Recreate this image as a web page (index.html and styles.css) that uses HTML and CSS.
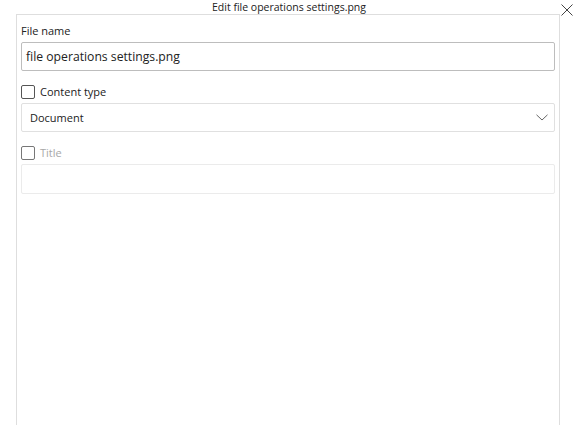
FILE: index.html
```html
<!DOCTYPE html>
<html lang="en">
<head>
<meta charset="utf-8">
<title>Edit file operations settings.png</title>
<link rel="stylesheet" href="styles.css">
</head>
<body>
<div class="dialog">
  <div class="header">
    <span class="title">Edit file operations settings.png</span>
    <button class="close" aria-label="Close">
      <svg width="12" height="12" viewBox="0 0 12 12"><path d="M0.5 0.5 L11.5 11.5 M11.5 0.5 L0.5 11.5" stroke="#444" stroke-width="1" fill="none"/></svg>
    </button>
  </div>
  <div class="panel">
    <div class="field">
      <label class="label">File name</label>
      <div class="input input-dark">file operations settings.png</div>
    </div>
    <div class="field">
      <div class="check-row"><span class="checkbox"></span><span class="label">Content type</span></div>
      <div class="input select">
        <span class="select-text">Document</span>
        <svg class="chevron" width="12" height="7" viewBox="0 0 12 7"><path d="M0.5 0.8 L6 6 L11.5 0.8" stroke="#666" stroke-width="1" fill="none"/></svg>
      </div>
    </div>
    <div class="field">
      <div class="check-row"><span class="checkbox"></span><span class="label muted">Title</span></div>
      <div class="input input-light"></div>
    </div>
  </div>
</div>
</body>
</html>
```
FILE: styles.css
```css
* { box-sizing: border-box; }
html, body { margin: 0; padding: 0; background: #fff; }
body {
  font-family: "Open Sans", "Noto Sans", sans-serif;
  color: #222;
  width: 578px;
  height: 425px;
  overflow: hidden;
}
.dialog { display: flex; flex-direction: column; }
.header {
  position: relative;
  height: 14px;
  display: flex;
  justify-content: center;
}
.title {
  font-size: 10.5px;
  line-height: 14px;
  color: #222;
  margin-top: 0;
}
.close {
  position: absolute;
  right: 5px;
  top: 4px;
  width: 12px;
  height: 12px;
  padding: 0;
  border: 0;
  background: transparent;
  display: block;
}
.close svg { display: block; }
.panel {
  margin-left: 16px;
  width: 544px;
  height: 420px;
  border: 1px solid #dedede;
  border-bottom: 0;
  padding: 8px 4px 0 4px;
  display: flex;
  flex-direction: column;
}
.field { display: flex; flex-direction: column; }
.label {
  font-size: 11px;
  line-height: 16px;
  color: #222;
}
.field > .label { margin-bottom: 3px; }
.input {
  height: 29px;
  border: 1px solid #c6c6c6;
  border-radius: 2px;
  font-size: 12.2px;
  padding: 0 4px;
  display: flex;
  align-items: center;
  color: #222;
}
.input-dark { border-color: #bdbdbd; }
.check-row {
  display: flex;
  align-items: center;
  margin-top: 13px;
  margin-bottom: 3px;
  height: 16px;
}
.checkbox {
  width: 14px;
  height: 14px;
  border: 1px solid #555;
  border-radius: 2px;
  margin-right: 5px;
}
.select {
  border-color: #e0e0e0;
  padding: 0 6px 0 8px;
  justify-content: space-between;
}
.select-text { font-size: 11px; }
.chevron { display: block; margin-right: 0; }
.muted { color: #a8a8a8; }
.field:last-child .checkbox { border-color: #777; }
.input-light { border-color: #ebebeb; height: 30px; }
```
